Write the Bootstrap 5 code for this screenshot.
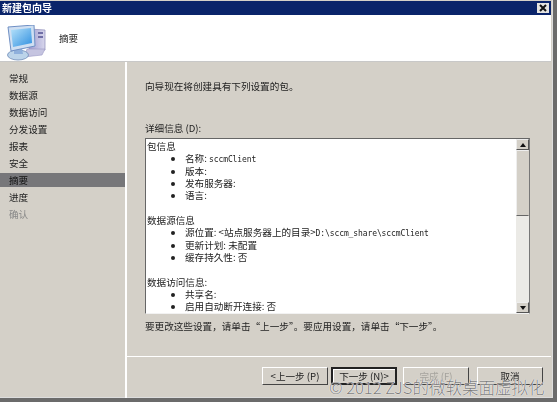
<!DOCTYPE html>
<html lang="zh-CN">
<head>
<meta charset="utf-8">
<title>新建包向导</title>
<link href="https://cdn.jsdelivr.net/npm/bootstrap@5.3.0/dist/css/bootstrap.min.css" rel="stylesheet">
<style>
html,body{margin:0;width:558px;height:403px;overflow:hidden;background:#fff}
body{font-family:"Noto Sans CJK SC",sans-serif;font-size:9.6px;line-height:1;color:#222}
.wiz-frame{width:557px;height:402px;position:relative;border-right:4px solid #6b6b6b;border-bottom:4px solid #6b6b6b;box-shadow:inset -1px -1px 0 #ddd;padding:1px 2px 2px 0;background:#d4d0c8;filter:blur(.45px)}
.wiz-title{height:14px;background:#0a246a;color:#fff;font-weight:700;font-size:10px;padding-left:2px}
.wiz-close{width:12px;height:10px;background:#e4e3e0;display:flex;align-items:center;justify-content:center;margin-right:2px}
.wiz-head{height:47px;background:#fff;padding-left:7px;border-bottom:1px solid #c8c8c8}
.wiz-head-text{margin-left:12px;margin-top:1px;color:#222}
.wiz-head svg{align-self:flex-end}
.wiz-body{height:336px}
.wiz-side{width:127px;border-right:2px solid #fff;padding-top:8px}
.wiz-side div{height:17px;line-height:17px;padding-left:9px;color:#222}
.wiz-side .wiz-on{height:14px;line-height:14px;margin:1px 0 2px;background:#77777a;color:#111}
.wiz-side .wiz-off{color:#888}
.wiz-main{flex:1;min-width:0}
.wiz-pane{height:295px;padding:17px 0 0 18px;border-bottom:1px solid #fff}
.wiz-lead{height:42px;line-height:14px;color:#222}
.wiz-label{height:17px;line-height:14px;color:#222}
.wiz-box{width:385px;height:176px;border:1px solid #666;border-right-color:#777;border-bottom-color:#f2f2f2;background:#fff;display:flex;overflow:hidden}
.wiz-text{flex:1;line-height:12.35px;padding:1px 0 0 1px;overflow:hidden;color:#222;white-space:nowrap}
.wiz-text ul{list-style:disc;margin:0 0 12.35px;padding-left:38px}
.wiz-text li{height:12.35px}
.wiz-text .wiz-code{font-family:"DejaVu Sans Mono",monospace;font-size:8px;letter-spacing:-.1px}
.wiz-bar{width:13px;background:#ebeae6;display:flex;flex-direction:column;justify-content:space-between;position:relative}
.wiz-arrow{height:11px;background:#d4d0c8;border:1px solid;border-color:#eee #555 #555 #eee;display:flex;align-items:center;justify-content:center}
.wiz-tri-up,.wiz-tri-dn{width:0;height:0;border-left:3.5px solid transparent;border-right:3.5px solid transparent}
.wiz-tri-up{border-bottom:4px solid #111}
.wiz-tri-dn{border-top:4px solid #111}
.wiz-thumb{position:absolute;left:0;right:0;top:11px;height:66px;background:#d4d0c8;border:1px solid;border-color:#eee #d4d0c8 #666 #eee}
.wiz-note{margin-top:5px;line-height:14px;color:#222}
.wiz-foot{height:40px;padding:10px 0 0 135px;gap:3px}
.wiz-foot .btn{width:66px;height:18px;padding:0;font-size:9.6px;line-height:15px;background:#d4d0c8;color:#222;border:1px solid;border-color:#fff #444 #444 #fff;border-radius:0}
.wiz-foot .btn.wiz-def{border:2px solid #222;line-height:13px;box-shadow:inset 1px 1px 0 #fff}
.wiz-foot .btn.disabled{color:#a5a39d;opacity:1;margin-left:3px;margin-right:5px}
.wiz-mark{position:absolute;left:329px;top:378px;font-size:16.5px;line-height:18px;color:#7c7c7c;font-weight:300;text-shadow:0 0 1px #fff,0 0 1px #fff;white-space:nowrap}
</style>
</head>
<body>
<div class="wiz-frame">
  <div class="wiz-title d-flex align-items-center justify-content-between">
    <span>新建包向导</span>
    <span class="wiz-close"><svg width="8" height="8" viewBox="0 0 8 8" aria-hidden="true"><path d="M1 1l6 6M7 1L1 7" stroke="#111" stroke-width="2"/></svg></span>
  </div>
  <div class="wiz-head d-flex align-items-center">
    <svg width="40" height="36" viewBox="0 0 40 36" aria-hidden="true">
      <defs>
        <linearGradient id="scr" x1="0" y1="0" x2="1" y2="1"><stop offset="0" stop-color="#b6e2fa"/><stop offset="1" stop-color="#2f8fe0"/></linearGradient>
        <linearGradient id="twr" x1="0" y1="0" x2="1" y2="0"><stop offset="0" stop-color="#9d9bd0"/><stop offset="1" stop-color="#d8d7ec"/></linearGradient>
      </defs>
      <path d="M22 4l16 1 0 20-16 2z" fill="url(#twr)" stroke="#8b8ab8" stroke-width=".7"/>
      <path d="M31 7h5v2h-5zM31 11h5v2h-5z" fill="#6f6ea6"/>
      <path d="M20 24l18 0-3 6-18 2z" fill="#c5c4e0" stroke="#9a99c4" stroke-width=".6"/>
      <ellipse cx="11" cy="30" rx="10.5" ry="5" fill="#bcd4ea" stroke="#6f8cb8" stroke-width=".8"/>
      <path d="M7 23h8l1 6h-9z" fill="#8fb0dc"/>
      <path d="M1 2l26-2 1 21-24 5z" fill="#cfdff2" stroke="#6f8fc4" stroke-width="1"/>
      <path d="M4 5l20-2 1 15-19 4z" fill="url(#scr)"/>
    </svg>
    <span class="wiz-head-text">摘要</span>
  </div>
  <div class="wiz-body d-flex">
    <div class="wiz-side">
      <div>常规</div>
      <div>数据源</div>
      <div>数据访问</div>
      <div>分发设置</div>
      <div>报表</div>
      <div>安全</div>
      <div class="wiz-on">摘要</div>
      <div>进度</div>
      <div class="wiz-off">确认</div>
    </div>
    <div class="wiz-main">
      <div class="wiz-pane">
        <div class="wiz-lead">向导现在将创建具有下列设置的包。</div>
        <div class="wiz-label">详细信息 (D):</div>
        <div class="wiz-box">
          <div class="wiz-text">
            包信息
            <ul>
              <li>名称: <span class="wiz-code">sccmClient</span></li>
              <li>版本:</li>
              <li>发布服务器:</li>
              <li>语言:</li>
            </ul>
            数据源信息
            <ul>
              <li>源位置: &lt;站点服务器上的目录&gt;<span class="wiz-code">D:\sccm_share\sccmClient</span></li>
              <li>更新计划: 未配置</li>
              <li>缓存持久性: 否</li>
            </ul>
            数据访问信息:
            <ul>
              <li>共享名:</li>
              <li>启用自动断开连接: 否</li>
            </ul>
          </div>
          <div class="wiz-bar">
            <div class="wiz-arrow"><span class="wiz-tri-up"></span></div>
            <div class="wiz-thumb"></div>
            <div class="wiz-arrow"><span class="wiz-tri-dn"></span></div>
          </div>
        </div>
        <div class="wiz-note">要更改这些设置，请单击“上一步”。要应用设置，请单击“下一步”。</div>
      </div>
      <div class="wiz-foot d-flex align-items-start">
        <button type="button" class="btn">&lt;上一步 (P)</button>
        <button type="button" class="btn wiz-def">下一步 (N)&gt;</button>
        <button type="button" class="btn disabled">完成 (F)</button>
        <button type="button" class="btn">取消</button>
      </div>
    </div>
  </div>
</div>
<div class="wiz-mark">© 2012 ZJS的微软桌面虚拟化</div>
</body>
</html>
